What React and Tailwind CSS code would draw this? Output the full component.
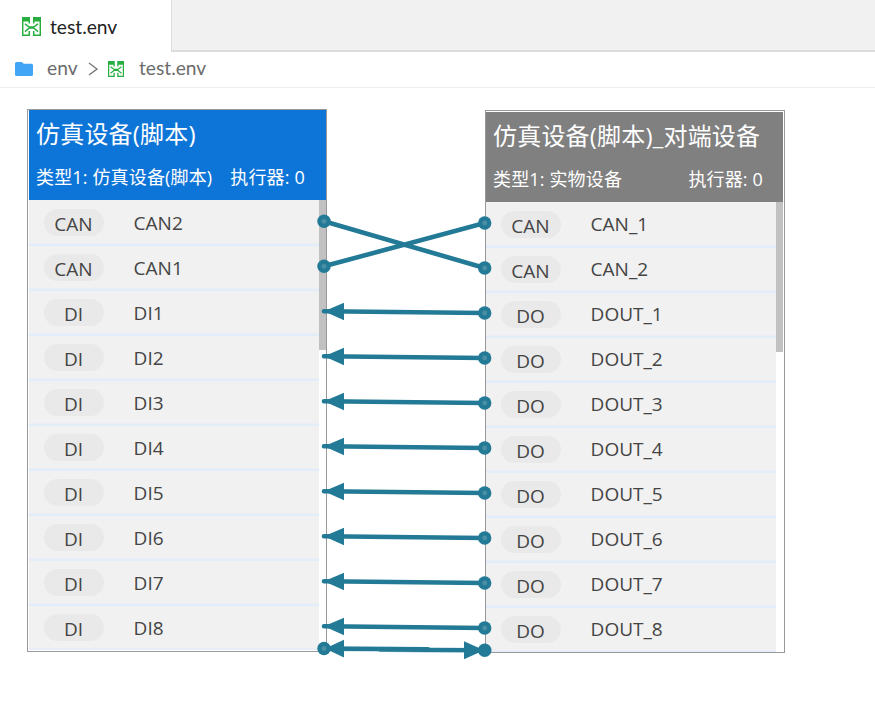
import React from "react";

const WIRE = "#237a96";

function EnvIcon({ className }) {
  return (
    <svg viewBox="0 0 19 19" className={className} fill="none" stroke="#27ae3f">
      <path d="M0 0H8V4.5H0ZM11 0H19V4.5H11Z" fill="#27ae3f" stroke="none" />
      <path d="M0.7 4V18.2H7.3V14M18.3 4V18.2H11.7V14M7.3 4V6.5M11.7 4V6.5" strokeWidth="1.5" />
      <path d="M3 6.8L7.3 10H11.7L16 6.8M3 14.6L7.3 11H11.7L16 14.6" strokeWidth="1.5" />
    </svg>
  );
}

function FolderIcon() {
  return (
    <svg viewBox="0 0 18 14" className="h-[14px] w-[18px]" fill="#42a5f5">
      <path d="M1.5 0H6.7L8.7 1.8H16.5A1.5 1.5 0 0 1 18 3.3V12.5A1.5 1.5 0 0 1 16.5 14H1.5A1.5 1.5 0 0 1 0 12.5V1.5A1.5 1.5 0 0 1 1.5 0Z" />
    </svg>
  );
}

function PortRow({ type, name, nameClass }) {
  return (
    <div className="flex h-[45px] shrink-0 items-start border-b-2 border-[#e2edf9] bg-[#f1f1f1] pl-[15px] pt-[8px] text-[19px] leading-[27px] text-[#444] shadow-[inset_0_-1px_0_#ebeff5]">
      <div className="h-[27px] w-[60px] rounded-full bg-[#e9e9e9] pr-px pt-[2px] text-center">{type}</div>
      <div className={"ml-[29.6px] " + nameClass}>{name}</div>
    </div>
  );
}

function Device({ title, kind, ports, className, headerClass, gapClass, nameClass }) {
  return (
    <section className={"absolute flex flex-col border border-[#999] bg-white " + className}>
      <header className={"flex h-[90px] shrink-0 flex-col whitespace-nowrap text-white " + headerClass}>
        <h2 className="mt-[6px] text-[24px] leading-[36px] tracking-[0.2px]">{title}</h2>
        <div className={"mt-[12px] flex text-[18px] leading-[27px] tracking-[0.15px] " + gapClass}>
          <span>{kind}</span>
          <span>执行器: 0</span>
        </div>
      </header>
      <div className="flex min-h-0 flex-1 overflow-hidden">
        <div className="flex flex-1 flex-col bg-[#f1f1f1] pt-px">
          {ports.map(([type, name]) => (
            <PortRow key={name} type={type} name={name} nameClass={nameClass} />
          ))}
        </div>
        <div className="w-[7px]">
          <div className="h-[150px] bg-[#c1c1c1]" />
        </div>
      </div>
    </section>
  );
}

const leftPorts = [["CAN", "CAN2"], ["CAN", "CAN1"], ...[1, 2, 3, 4, 5, 6, 7, 8].map((n) => ["DI", "DI" + n])];
const rightPorts = [["CAN", "CAN_1"], ["CAN", "CAN_2"], ...[1, 2, 3, 4, 5, 6, 7, 8].map((n) => ["DO", "DOUT_" + n])];

function Dot({ x, y }) {
  return (
    <>
      <circle cx={x} cy={y} r="6.7" fill={WIRE} />
      <circle cx={x} cy={y} r="2.4" fill="#4b8fa5" />
    </>
  );
}

function Wires() {
  const rows = [0, 1, 2, 3, 4, 5, 6, 7];
  return (
    <svg className="pointer-events-none absolute left-0 top-0 h-[721px] w-[875px]" viewBox="0 0 875 721">
      <g stroke={WIRE} strokeWidth="4.6" strokeLinecap="round">
        <path d="M324 221.3L484.7 268M324 266.3L484.7 223" />
        {rows.map((n) => (
          <path key={n} d={`M324 ${311.3 + n * 45}L484.7 ${313 + n * 45}`} />
        ))}
        <path d="M324 648.6L428 649.2M380 649.8L484.7 650.2" />
      </g>
      <g fill={WIRE}>
        {rows.map((n) => (
          <path key={n} d={`M324 ${311.3 + n * 45}L344 ${302.7 + n * 45}V${320.3 + n * 45}Z`} />
        ))}
        <path d="M325 648.5L344 639.7V657.5ZM484 650.3L464 641.2V659.3Z" />
      </g>
      <Dot x={324} y={221.3} />
      <Dot x={324} y={266.3} />
      <Dot x={484.7} y={223} />
      <Dot x={484.7} y={268} />
      {rows.map((n) => (
        <Dot key={n} x={484.7} y={313 + n * 45} />
      ))}
      <Dot x={324} y={648.5} />
      <circle cx="484.7" cy="650.3" r="6.8" fill={WIRE} />
    </svg>
  );
}

export default function App() {
  return (
    <div className="flex h-[721px] w-[875px] flex-col overflow-hidden bg-white font-['Open_Sans','Noto_Sans_CJK_SC',sans-serif]">
      <div className="flex h-[52px] shrink-0">
        <div className="flex w-[171px] items-center pl-[22px] pt-px text-[#222]">
          <EnvIcon className="h-[19px] w-[19px]" />
          <span className="ml-[9px] pt-px font-[family-name:Lato,sans-serif] text-[19.2px]">test.env</span>
        </div>
        <div className="flex-1 border-b-2 border-l border-[#dcdcdc] bg-[#f1f1f1]" />
      </div>
      <nav className="flex h-[36px] shrink-0 items-center border-b border-[#eee] pb-[2px] pl-[15px] font-[family-name:Lato,sans-serif] text-[19.2px] text-[#6c6c6c]">
        <FolderIcon />
        <span className="ml-[14px] w-[31px]">env</span>
        <svg viewBox="0 0 10 14" className="ml-[10px] h-[14px] w-[10px]" fill="none" stroke="#777" strokeWidth="1.4">
          <path d="M1 1L9 7L1 13" />
        </svg>
        <EnvIcon className="ml-[10px] h-4 w-4" />
        <span className="ml-[15px]">test.env</span>
      </nav>
      <main className="relative flex-1">
        <Device
          className="left-[27px] top-[21px] h-[543px] w-[300px] pl-px pb-px"
          headerClass="bg-[#0e75d8] pl-[7px]"
          gapClass="gap-[18px]"
          nameClass="mt-px"
          title="仿真设备(脚本)"
          kind="类型1: 仿真设备(脚本)"
          ports={leftPorts}
        />
        <Device
          className="left-[485px] top-[22px] h-[543px] w-[300px] pr-px pt-px"
          headerClass="bg-[#808080] pl-[7px]"
          gapClass="justify-between pr-[20px]"
          nameClass=""
          title="仿真设备(脚本)_对端设备"
          kind="类型1: 实物设备"
          ports={rightPorts}
        />
        <div className="absolute -top-[88px] left-0">
          <Wires />
        </div>
      </main>
    </div>
  );
}
